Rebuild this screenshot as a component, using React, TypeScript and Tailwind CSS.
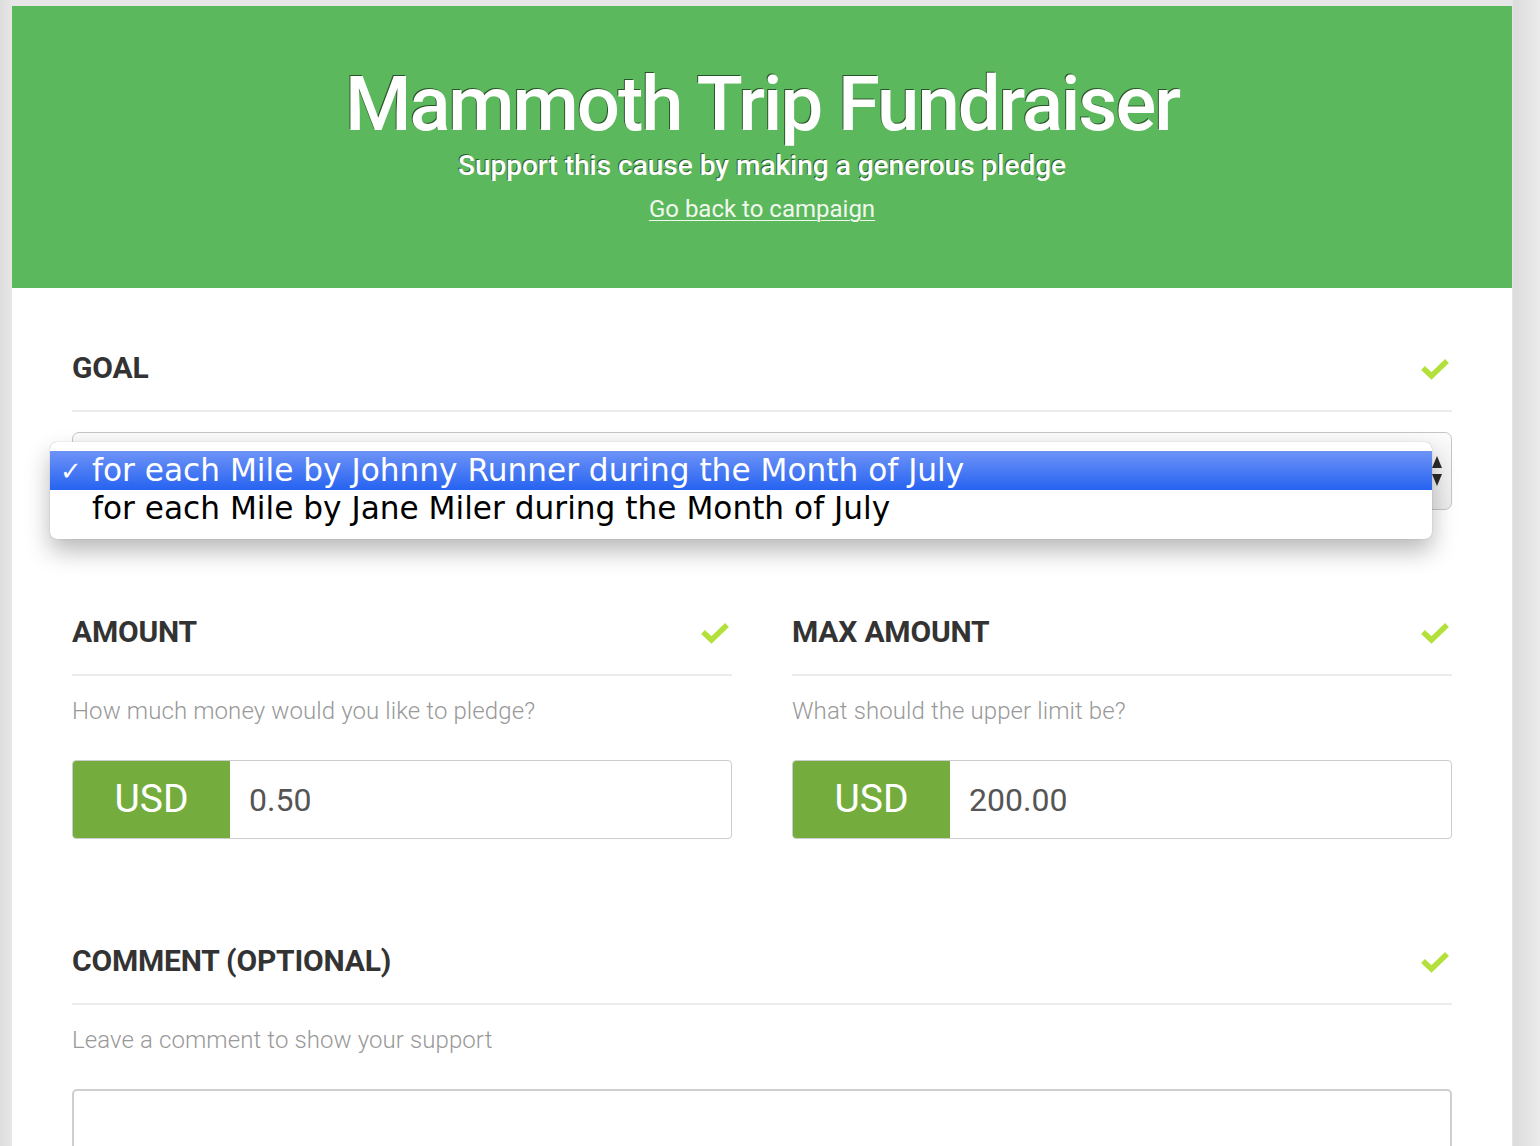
import React from "react";

function Check() {
  return (
    <svg width="30" height="24" viewBox="0 0 30 24" className="shrink-0">
      <path d="M3 12 L11.5 20 L27 5" fill="none" stroke="#b3e03a" strokeWidth="5.5" strokeLinejoin="miter" />
    </svg>
  );
}

function SectionHead({ title }: { title: string }) {
  return (
    <div className="flex items-center justify-between border-b-2 border-[#ececec] pb-[27px]">
      <div className="text-[30px] font-bold leading-none text-[#333] tracking-[-0.2px]">{title}</div>
      <div className="mr-[2px]">
        <Check />
      </div>
    </div>
  );
}

function InputGroup({ value }: { value: string }) {
  return (
    <div className="flex h-[79px] overflow-hidden rounded-[4px] border border-[#cccccc]">
      <div className="flex w-[157px] items-center justify-center bg-[#74ad3e] text-[39px] leading-none text-white">
        USD
      </div>
      <div className="flex flex-1 items-center pl-[19px] text-[32px] leading-none text-[#555]">{value}</div>
    </div>
  );
}

export default function App() {
  return (
    <div className="h-[1146px] overflow-hidden bg-[linear-gradient(90deg,#dedede_0px,#e6e6e6_12px,#e6e6e6_1512px,#dcdcdc_1514px,#ebebeb_1540px)] pl-[12px] pr-[28px] pt-[6px] font-['Roboto',sans-serif]">
      <div className="h-full bg-white">
        <header className="flex h-[282px] flex-col items-center bg-[#5cb85c] pt-[60px] text-white">
          <h1 className="text-[76px] font-medium leading-none tracking-[-2px] [text-shadow:-1px_-1px_0_rgba(0,0,0,0.55)]">
            Mammoth Trip Fundraiser
          </h1>
          <p className="mt-[10px] text-[28px] font-medium leading-none [text-shadow:-1px_-1px_0_rgba(0,0,0,0.5)]">
            Support this cause by making a generous pledge
          </p>
          <a href="#" className="mt-[17px] text-[24px] leading-none text-[#f0f8ee] underline underline-offset-[3px] decoration-1">
            Go back to campaign
          </a>
        </header>

        <main className="px-[60px] pt-[65px]">
          <section>
            <SectionHead title="GOAL" />
            <div className="relative mt-[20px] h-[78px]">
              <div className="h-full rounded-[7px] border border-[#c6c6c6] bg-[linear-gradient(#fbfbfb,#ececec)]">
                <div className="flex h-full items-center justify-end pr-[8px]">
                  <svg width="12" height="34" viewBox="0 0 12 34">
                    <path d="M6 2 L11 14 L1 14 Z" fill="#2b2b2b" />
                    <path d="M6 32 L11 20 L1 20 Z" fill="#2b2b2b" />
                  </svg>
                </div>
              </div>
              <div className="absolute left-[-22px] top-[10px] w-[1382px] rounded-[7px] bg-white pb-[12px] pt-[9px] font-['DejaVu_Sans',sans-serif] text-[31.2px] leading-none shadow-[0_12px_24px_rgba(0,0,0,0.28),0_0_1px_rgba(0,0,0,0.35)]">
                <div className="flex h-[39px] items-center bg-[linear-gradient(#6e93f7,#2663f1)] text-white">
                  <span className="w-[42px] pl-[10px] text-[26px] font-bold">✓</span>
                  <span>for each Mile by Johnny Runner during the Month of July</span>
                </div>
                <div className="flex h-[37px] items-center text-black">
                  <span className="w-[42px]" />
                  <span>for each Mile by Jane Miler during the Month of July</span>
                </div>
              </div>
            </div>
          </section>

          <section className="mt-[107px] grid grid-cols-2 gap-[60px]">
            <div>
              <SectionHead title="AMOUNT" />
              <p className="mt-[23px] text-[24px] font-light leading-none tracking-[0.1px] text-[#999]">
                How much money would you like to pledge?
              </p>
              <div className="mt-[37px]">
                <InputGroup value="0.50" />
              </div>
            </div>
            <div>
              <SectionHead title="MAX AMOUNT" />
              <p className="mt-[23px] text-[24px] font-light leading-none tracking-[0.1px] text-[#999]">
                What should the upper limit be?
              </p>
              <div className="mt-[37px]">
                <InputGroup value="200.00" />
              </div>
            </div>
          </section>

          <section className="mt-[107px]">
            <SectionHead title="COMMENT (OPTIONAL)" />
            <p className="mt-[23px] text-[24px] font-light leading-none tracking-[0.1px] text-[#999]">
              Leave a comment to show your support
            </p>
            <textarea className="mt-[37px] block h-[200px] w-full resize-none rounded-[5px] border-2 border-[#cfcfcf] bg-white" />
          </section>
        </main>
      </div>
    </div>
  );
}
